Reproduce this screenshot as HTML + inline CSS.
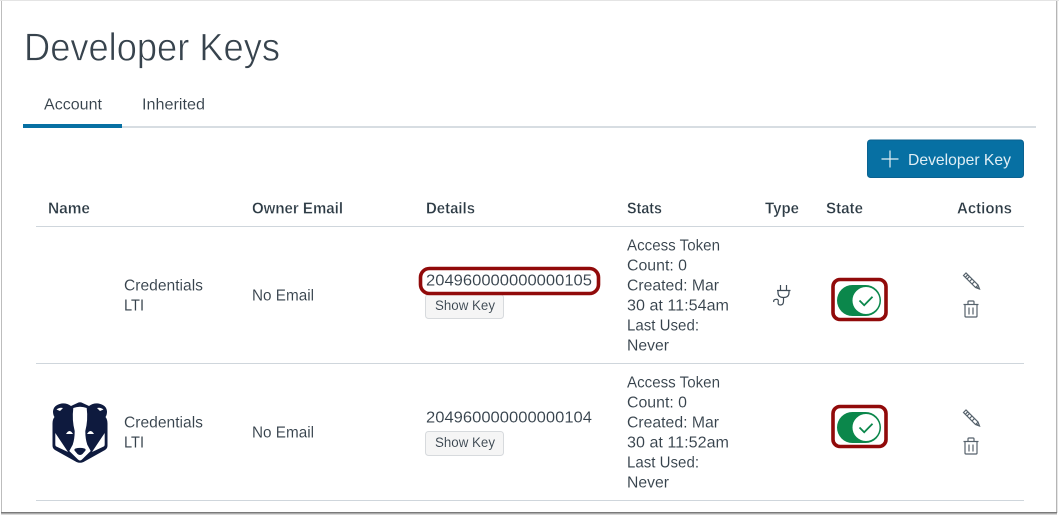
<!DOCTYPE html>
<html>
<head>
<meta charset="utf-8">
<style>
html,body{margin:0;padding:0;background:#fff;width:1059px;height:515px;overflow:hidden}
svg{display:block;font-family:"Liberation Sans",sans-serif}
text{fill:#35414b;font-size:16px;stroke:#fff;stroke-width:.08px}
.b{font-weight:bold;fill:#2d3b45;stroke-width:.3px}
</style>
</head>
<body>
<svg width="1059" height="515" viewBox="0 0 1059 515" xmlns="http://www.w3.org/2000/svg">
<defs>
<g id="row">
  <text x="124" y="290.500" textLength="79" lengthAdjust="spacingAndGlyphs">Credentials</text>
  <text x="124" y="310.500" textLength="20" lengthAdjust="spacingAndGlyphs">LTI</text>
  <text x="252" y="300.500" textLength="62" lengthAdjust="spacingAndGlyphs">No Email</text>
  <rect x="425.500" y="294.500" width="78" height="24" rx="3" fill="#f5f5f5" stroke="#d7dadd"/>
  <text x="435" y="310" style="font-size:14px" textLength="60" lengthAdjust="spacingAndGlyphs">Show Key</text>
  <text x="627" y="250.500" textLength="93" lengthAdjust="spacingAndGlyphs">Access Token</text>
  <text x="627" y="270.500" textLength="60" lengthAdjust="spacingAndGlyphs">Count: 0</text>
  <text x="627" y="290.500" textLength="92" lengthAdjust="spacingAndGlyphs">Created: Mar</text>
  <text x="627" y="330.500" textLength="72" lengthAdjust="spacingAndGlyphs">Last Used:</text>
  <text x="627" y="350.500" textLength="42" lengthAdjust="spacingAndGlyphs">Never</text>
  <!-- pencil -->
  <g fill="none" stroke="#56626c" stroke-width="1.200">
    <path d="M963.500 275.500l2.500-2.500 12 12 1.500 4-4-1.500z" fill="#fff"/>
    <path d="M965.300 277.300l2.500-2.500M967 279l2.700-2.700M969.500 281.500l2.700-2.700M972 284l2.700-2.700"/>
    <path d="M975.500 287.500l2.700-2.700" stroke-width="1"/>
  </g>
  <path d="M977 286l2.500 3.500-3.800-1.500z" fill="#56626c"/>
  <!-- trash -->
  <g fill="none" stroke="#56626c" stroke-width="1.200">
    <path d="M963.500 304.500h15"/>
    <path d="M968 304.500v-2.500q0-1 1-1h4q1 0 1 1v2.500"/>
    <path d="M965 304.500v11.500q0 1 1 1h10q1 0 1-1v-11.500"/>
    <path d="M969 307.500v7M973 307.500v7"/>
  </g>
</g>
<g id="toggle">
  <rect x="837" y="285" width="44" height="31" rx="15.500" fill="#0b874b"/>
  <circle cx="866" cy="300.500" r="14" fill="#fff" stroke="#0b874b" stroke-width="1"/>
  <path d="M859.500 300.500l4.700 4.700 8.300-8.500" fill="none" stroke="#0b874b" stroke-width="1.800"/>
  <rect x="833" y="279.500" width="53" height="40" rx="7" fill="none" stroke="#910a0a" stroke-width="3.600"/>
</g>
</defs>

<!-- frame -->
<rect x="0" y="0" width="1059" height="515" fill="#fff"/>
<rect x="1" y="0" width="1" height="512" fill="#bdbdbd"/>
<rect x="1056" y="0" width="1" height="512" fill="#b5b5b5"/>
<rect x="1057" y="0" width="1" height="513" fill="#e6e6e6"/>
<rect x="0" y="0" width="1059" height="1" fill="#e4e4e4"/>
<rect x="1" y="512" width="1056" height="1.500" fill="#7a7a7a"/>
<rect x="1" y="513.500" width="1056" height="1.500" fill="#d9d9d9"/>

<!-- title -->
<text x="24" y="60.500" style="font-size:39px;fill:#37434d;stroke-width:.65px" textLength="256" lengthAdjust="spacingAndGlyphs">Developer Keys</text>

<!-- tabs -->
<text x="44" y="109.500" textLength="58" lengthAdjust="spacingAndGlyphs">Account</text>
<text x="142" y="109.500" textLength="63" lengthAdjust="spacingAndGlyphs">Inherited</text>
<rect x="23" y="126" width="1013" height="2" fill="#d7dde2"/>
<rect x="23" y="124" width="99" height="4" fill="#0770a3"/>

<!-- button -->
<rect x="867.500" y="140" width="156" height="37.500" rx="3" fill="#0770a3" stroke="#0a6291"/>
<path d="M890 150.500v17M881.500 159h17" stroke="#e6f1f6" stroke-width="1.200" fill="none"/>
<text x="908" y="165" style="fill:#dfeef5;stroke:none" textLength="103" lengthAdjust="spacingAndGlyphs">Developer Key</text>

<!-- headers -->
<text class="b" x="48" y="213.500" textLength="42" lengthAdjust="spacingAndGlyphs">Name</text>
<text class="b" x="252" y="213.500" textLength="91" lengthAdjust="spacingAndGlyphs">Owner Email</text>
<text class="b" x="426" y="213.500" textLength="49" lengthAdjust="spacingAndGlyphs">Details</text>
<text class="b" x="627" y="213.500" textLength="35" lengthAdjust="spacingAndGlyphs">Stats</text>
<text class="b" x="765" y="213.500" textLength="34" lengthAdjust="spacingAndGlyphs">Type</text>
<text class="b" x="826" y="213.500" textLength="37" lengthAdjust="spacingAndGlyphs">State</text>
<text class="b" x="957" y="213.500" textLength="55" lengthAdjust="spacingAndGlyphs">Actions</text>
<rect x="36" y="226" width="988" height="1" fill="#cfd6dc"/>

<!-- row 1 -->
<use href="#row"/>
<use href="#toggle"/>
<text x="426" y="285.500" textLength="166" lengthAdjust="spacingAndGlyphs">204960000000000105</text>
<text x="627" y="310.500" textLength="102" lengthAdjust="spacingAndGlyphs">30 at 11:54am</text>
<rect x="420.500" y="268.500" width="178" height="25" rx="9" fill="none" stroke="#910a0a" stroke-width="3.600"/>
<!-- plug -->
<g fill="none" stroke="#3f4c57" stroke-width="1.200">
  <path d="M780.500 285v5M786.500 285v5"/>
  <path d="M777 290.500h13.500M778 290.500v2q0 5 5.500 5t5.500-5v-2"/>
  <path d="M783.500 297.500v3.500q0 4-3 4t-2.300-3-2.200-2.700-2.200 2.700"/>
</g>
<rect x="36" y="363" width="988" height="1" fill="#cfd6dc"/>

<!-- row 2 -->
<use href="#row" y="137"/>
<use href="#toggle" y="127"/>
<text x="426" y="422.500" textLength="166" lengthAdjust="spacingAndGlyphs">204960000000000104</text>
<text x="627" y="447.500" textLength="102" lengthAdjust="spacingAndGlyphs">30 at 11:52am</text>
<!-- badger -->
<path d="M78.500 402.500l-7.500 3.500q-4-3-9.500-2.500-8 1.500-8.500 8 0 3.500 1.500 5.500-2 2.500-2 6.500v22q0 3 2.500 4.500l21.500 12q3.500 1.500 7 0l21.500-12q2.500-1.500 2.500-4.500v-22q0-4-2-6.500 1.500-2 1.500-5.500-.5-6.500-8.500-8-5.500-.5-9.500 2.500l-7.500-3.500q-1.500-.5-3 0z" fill="#0e1a3e"/>
<path d="M73.300 408q6.700-2.500 13.400 0 1.500 12-1.400 23 0 8 2 13.700l3.400 6.300-8.700 8.500q-2 2-4 0l-8.700-8.500 3.400-6.300q2-5.700 2-13.700-2.900-11-1.400-23z" fill="#fff"/>
<path d="M55.300 433l12.700 19-11.700-5.500q-1-.5-1-2zM104.700 433l-12.700 19 11.700-5.500q1-.5 1-2z" fill="#fff"/>
<path d="M75.500 448.500q4.500-1.200 9 0 1.500.5 1 2l-3 3.500q-2.500 2-5 0l-3-3.500q-.5-1.500 1-2z" fill="#0e1a3e"/>
<path d="M56.500 409.500q3-2.500 6.500-1.500l-3 3zM103.500 409.500q-3-2.500-6.500-1.500l3 3z" fill="#fff"/>
<path d="M66 434q3.500-6 7 0zM87 434q3.500-6 7 0z" fill="#fff"/>
<rect x="36" y="500" width="988" height="1" fill="#cfd6dc"/>
</svg>
</body>
</html>
